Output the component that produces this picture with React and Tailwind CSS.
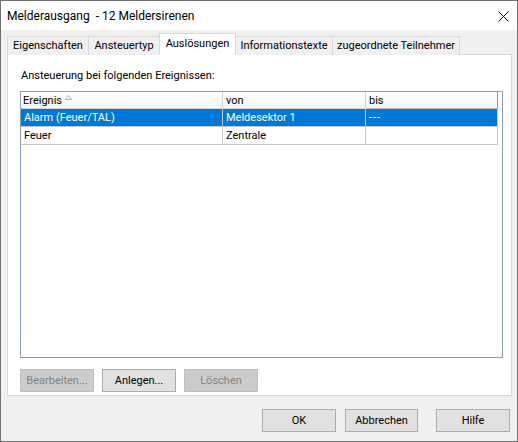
import React from "react";

const font = { fontFamily: 'Roboto, "Noto Sans", sans-serif' };

function Tab({ label, w, active, first }) {
  if (active) {
    return (
      <div
        className={`${first ? "" : "-ml-px"} relative z-10 h-[22px] bg-white border border-b-0 border-[#d9d9d9] flex items-start justify-center pt-[2px] ${w}`}
      >
        <span className="leading-[16px]">{label}</span>
      </div>
    );
  }
  return (
    <div
      className={`${first ? "" : "-ml-px"} h-[19px] bg-[#f0f0f0] border border-b-0 border-[#d9d9d9] flex items-center justify-center ${w}`}
    >
      <span className="leading-[16px]">{label}</span>
    </div>
  );
}

function Btn({ label, disabled, w = "w-[74px]" }) {
  return (
    <div
      className={`${w} h-[23px] flex items-center justify-center border ${
        disabled
          ? "bg-[#cccccc] border-[#bfbfbf] text-[#838383]"
          : "bg-[#e1e1e1] border-[#adadad] text-black"
      }`}
    >
      <span className="leading-[16px]">{label}</span>
    </div>
  );
}

export default function App() {
  return (
    <div
      style={font}
      className="w-[518px] h-[442px] bg-[#f0f0f0] border border-[#707070] flex flex-col text-[11px] text-black overflow-hidden"
    >
      {/* Title bar */}
      <div className="h-[29px] bg-white flex items-center pl-[6px] pr-[8px] shrink-0">
        <span className="whitespace-pre leading-[16px] mt-[1px] text-[12px]">Melderausgang  - 12 Meldersirenen</span>
        <svg className="ml-auto mt-[1px]" width="11" height="11" viewBox="0 0 11 11">
          <path d="M0.5 0.5 L10.5 10.5 M10.5 0.5 L0.5 10.5" stroke="#000" strokeWidth="1" />
        </svg>
      </div>

      {/* Body */}
      <div className="flex flex-col pl-[6px] pt-[3px]">
        {/* Tabs */}
        <div className="flex items-end -mb-px relative z-10">
          <Tab label="Eigenschaften" w="w-[82px]" first />
          <Tab label="Ansteuertyp" w="w-[72px]" />
          <Tab label="Auslösungen" w="w-[77px]" active />
          <Tab label="Informationstexte" w="w-[98px]" />
          <Tab label="zugeordnete Teilnehmer" w="w-[128px]" />
        </div>

        {/* Panel */}
        <div className="w-[505px] h-[342px] bg-white border border-[#d9d9d9] flex flex-col pl-[12px] pt-[13px]">
          <div className="leading-[16px] pl-[1px]">Ansteuerung bei folgenden Ereignissen:</div>

          {/* List */}
          <div className="mt-[7px] w-[483px] h-[267px] border border-[#8a9fbd] bg-white flex flex-col">
            {/* Header */}
            <div className="flex h-[17px] bg-gradient-to-b from-white to-[#f4f4f4]">
              <div className="w-[202px] border-r border-b border-[#d5d5d5] flex items-center pl-[2px]">
                <span className="leading-[15px]">Ereignis</span>
                <svg className="ml-[3px] mb-[5px]" width="7" height="5" viewBox="0 0 7 5">
                  <path d="M0.5 4.5 L3.5 0.5 L6.5 4.5 Z" fill="none" stroke="#b0b0b0" strokeWidth="1" />
                </svg>
              </div>
              <div className="w-[143px] border-r border-b border-[#d5d5d5] flex items-center pl-[3px]">
                <span className="leading-[15px]">von</span>
              </div>
              <div className="w-[132px] border-r border-b border-r-[#9a9a9a] border-b-[#bcbcbc] flex items-center pl-[3px]">
                <span className="leading-[15px]">bis</span>
              </div>
            </div>

            {/* Rows */}
            <div className="flex h-[18px] text-white">
              <div className="w-[202px] bg-[#0078d7] border-r border-b border-[#c6c6c6] flex items-center pl-[3px]">
                <span className="leading-[16px]">Alarm (Feuer/TAL)</span>
              </div>
              <div className="w-[143px] bg-[#0078d7] border-r border-b border-[#c6c6c6] flex items-center pl-[3px]">
                <span className="leading-[16px]">Meldesektor 1</span>
              </div>
              <div className="w-[132px] bg-[#0078d7] border-r border-b border-[#c6c6c6] flex items-center pl-[3px]">
                <span className="leading-[16px] tracking-[1px]">---</span>
              </div>
            </div>
            <div className="flex h-[18px]">
              <div className="w-[202px] border-r border-b border-[#c6c6c6] flex items-center pl-[3px]">
                <span className="leading-[16px]">Feuer</span>
              </div>
              <div className="w-[143px] border-r border-b border-[#c6c6c6] flex items-center pl-[3px]">
                <span className="leading-[16px]">Zentrale</span>
              </div>
              <div className="w-[132px] border-r border-b border-[#c6c6c6]" />
            </div>
          </div>

          {/* Panel buttons */}
          <div className="flex gap-[8px] mt-[11px]">
            <Btn label="Bearbeiten..." disabled />
            <Btn label="Anlegen..." />
            <Btn label="Löschen" disabled />
          </div>
        </div>

        {/* Dialog buttons */}
        <div className="flex mt-[13px] pr-[7px] justify-end">
          <Btn label="OK" />
          <div className="w-[9px]" />
          <Btn label="Abbrechen" w="w-[73px]" />
          <div className="w-[18px]" />
          <Btn label="Hilfe" />
        </div>
      </div>
    </div>
  );
}
